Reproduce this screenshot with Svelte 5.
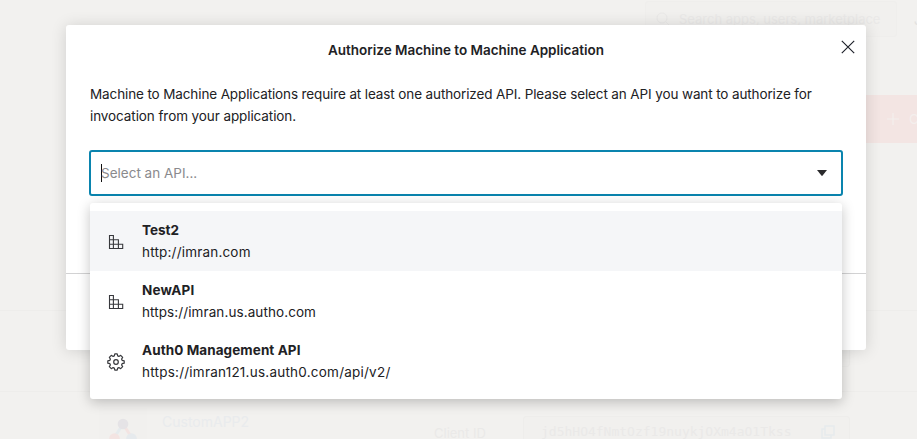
<script>
  const apis = [
    { name: 'Test2', url: 'http://imran.com', icon: 'blocks', nameGap: 0, urlGap: 0.19 },
    { name: 'NewAPI', url: 'https://imran.us.autho.com', icon: 'blocks', nameGap: 0.2, urlGap: 0.09 },
    { name: 'Auth0 Management API', url: 'https://imran121.us.auth0.com/api/v2/', icon: 'gear', nameGap: 0.08, urlGap: 0.23 }
  ];
  const apps = [
    { name: '', clientId: '' },
    { name: 'CustomAPP2', clientId: 'jd5hHO4fNmtOzf19nuykjOXm4aO1Tkss' }
  ];
  let active = $state(0);
</script>

<div class="screen">
  <div class="page" aria-hidden="true">
    <div class="top">
      <div class="search">
        <svg width="14" height="14" viewBox="0 0 14 14" fill="none" stroke="currentColor"><circle cx="6" cy="6" r="5" /><path d="m10 10 3 3" /></svg>
        <span>Search apps, users, marketplace</span>
      </div>
      <span class="nav">J</span>
    </div>
    <div class="actions">
      <div class="create">
        <svg width="12" height="12" viewBox="0 0 12 12" stroke="currentColor" stroke-width="1.2"><path d="M6 0v12M0 6h12" /></svg>
        <span>C</span>
      </div>
    </div>
    {#each apps as app}
      <div class="app">
        <div class="logo">
          <svg width="48" height="48" viewBox="0 0 48 48">
            <path d="m24 16-9 14" stroke="#e6ebed" stroke-width="3" />
            <path d="m24 16 9 14" stroke="#f3e4e2" stroke-width="3" />
            <circle cx="24" cy="16" r="5.3" fill="#e5e3e6" />
            <circle cx="15.5" cy="30.5" r="5.3" fill="#f3e4e2" />
            <circle cx="32.5" cy="30.5" r="5.3" fill="#e6eaed" />
          </svg>
        </div>
        <span class="app-name">{app.name}</span>
        <span class="label">Client ID</span>
        <div class="client">
          <span>{app.clientId}</span>
          <svg width="14" height="14" viewBox="0 0 14 14" fill="none" stroke="currentColor" stroke-width="1.5"><path d="M4 1h9v9H4zM4 4H1v9h9v-3" /></svg>
        </div>
      </div>
    {/each}
  </div>

  <section class="modal" role="dialog" aria-label="Authorize Machine to Machine Application">
    <header>
      <h1>Authorize Machine to Machine Application</h1>
      <button class="close" aria-label="Close">
        <svg width="14" height="14" viewBox="0 0 14 14" stroke="#1e212a" stroke-width="1.15"><path d="m.8.8 12.4 12.4M13.2.8.8 13.2" /></svg>
      </button>
    </header>
    <p><span class="line1">Machine to Machine Applications require at least one authorized API. Please select an API you want to authorize for</span><br /><span class="line2">invocation from your application.</span></p>
    <div class="select">
      <i class="caret"></i>
      <span class="placeholder">Select an API...</span>
      <svg class="arrow" width="10" height="6" viewBox="0 0 10 6"><path d="M0 0h10L5.6 5.6q-.6.6-1.2 0z" fill="#2a2a2c" /></svg>
      <ul class="menu">
        {#each apis as api, i}
          <li class:active={i === active} onmouseenter={() => (active = i)}>
            <span class="icon">
              {#if api.icon === 'blocks'}
                <svg width="16" height="16" viewBox="0 0 16 16" fill="none" stroke="#37383c" stroke-width="1.1"><path d="M1.5 1v13.5h13.2v-4.2H1.5M1 1.5h4.4v13M1.5 5.7h8.9v8.8" /></svg>
              {:else}
                <svg width="18" height="18" viewBox="0 0 18 18" fill="none" stroke="#37383c" stroke-width="1.2" stroke-linejoin="round"><path d="M7.8 .8h2.4l.5 2.1 1.2.5 1.8-1.1 2 2-1.1 1.8.5 1.2 2.1.5v2.4l-2.1.5-.5 1.2 1.1 1.8-2 2-1.8-1.1-1.2.5-.5 2.1H7.8l-.5-2.1-1.2-.5-1.8 1.1-2-2 1.1-1.8-.5-1.2-2.1-.5V7.8l2.1-.5.5-1.2-1.1-1.8 2-2 1.8 1.1 1.2-.5z" /><circle cx="9" cy="9" r="2.3" /></svg>
              {/if}
            </span>
            <div class="text">
              <strong style:letter-spacing="{api.nameGap}px">{api.name}</strong>
              <span style:letter-spacing="{api.urlGap}px">{api.url}</span>
            </div>
          </li>
        {/each}
      </ul>
    </div>
    <footer></footer>
  </section>
</div>

<style>
  :global(body) { margin: 0; overflow: hidden; }
  .screen {
    position: relative; width: 917px; height: 439px; overflow: hidden;
    background: #f2f1ef; color: #212124;
    font: 13.5px/22px Inter, "Liberation Sans", sans-serif;
  }
  .page { height: 439px; overflow: hidden; color: #eae9e8; white-space: nowrap; }
  .top { display: flex; height: 94px; padding-top: 1px; align-items: flex-start; }
  .search {
    display: flex; flex-shrink: 0; box-sizing: border-box; width: 252px; height: 36px; margin-left: 645px; padding-left: 10px;
    align-items: center; gap: 9px; border: 1px solid #efeeec; border-radius: 3px; background: #f1f0ee;
    font-size: 13px;
  }
  .search svg { flex-shrink: 0; }
  .nav { margin: 8px 0 0 17px; color: #e2e1e0; }
  .actions { display: flex; height: 215px; justify-content: flex-end; align-items: flex-start; }
  .create {
    display: flex; box-sizing: border-box; width: 73px; height: 48px; padding-left: 43px; align-items: center;
    gap: 10px; background: #f3e5e3; color: #f3efed; overflow: hidden;
  }
  .create svg { flex-shrink: 0; }
  .app {
    display: flex; box-sizing: border-box; height: 81px; padding: 16px 67px 0 99px;
    border-top: 1px solid #eeedeb; align-items: flex-start;
  }
  .logo { width: 48px; height: 48px; margin-right: 15px; background: #f1f0ee; }
  .app-name { width: 272px; margin-top: 3px; color: #e9ebed; font-size: 14px; }
  .label { width: 89px; margin-top: 14px; font-size: 13px; }
  .client {
    display: flex; box-sizing: border-box; width: 327px; height: 32px; margin-top: 8px; padding: 0 14px 0 17px;
    align-items: center; justify-content: space-between; border: 1px solid #eeedeb; border-radius: 3px;
    background: #f1f0ee; font: 13px/20px "DejaVu Sans Mono", monospace;
  }
  .client svg { color: #e6eaed; }
  .modal {
    position: absolute; left: 66px; top: 25px; width: 800px; height: 325px; box-sizing: border-box;
    display: flex; flex-direction: column; border-radius: 3px; background: #fff;
    box-shadow: 0 1px 16px rgb(0 0 0 / 14%);
  }
  header { display: grid; grid-template-columns: 48px 1fr 48px; height: 58px; }
  h1 { grid-column: 2; margin: 14px 0 0; font-size: 13.5px; line-height: 22px; font-weight: 600; text-align: center; letter-spacing: -.02px; }
  .close { display: flex; width: 20px; height: 20px; margin: 12px 0 0 20px; padding: 0; border: 0; background: none; align-items: center; justify-content: center; }
  p { height: 44px; margin: 0 0 23px 24px; white-space: nowrap; }
  .line1 { letter-spacing: -.12px; }
  .line2 { letter-spacing: -.09px; }
  .select {
    position: relative; display: flex; box-sizing: border-box; width: 754px; height: 46px; margin-left: 23px;
    padding: 0 14px 0 10px; border: 2px solid #0a84ae; border-radius: 3px; align-items: center;
  }
  .caret { width: 1px; height: 18px; background: #111; }
  .placeholder { flex: 1; margin-left: -1px; color: #8a8a8d; }
  .menu {
    position: absolute; left: -1px; top: 51px; width: 752px; height: 196px; box-sizing: border-box; margin: 0;
    padding: 8px 0; list-style: none; background: #fff; border-radius: 3px;
    box-shadow: 0 3px 13px rgb(0 0 0 / 23%);
  }
  li { display: flex; height: 60px; align-items: center; }
  li.active { background: #f5f6f8; }
  .icon { display: flex; width: 52px; padding-top: 2px; justify-content: center; }
  .text { display: flex; flex-direction: column; white-space: nowrap; }
  strong { font-weight: 700; }
  footer { margin-top: auto; height: 76px; border-top: 1px solid #d2d2d3; border-radius: 0 0 3px 3px; }
</style>
